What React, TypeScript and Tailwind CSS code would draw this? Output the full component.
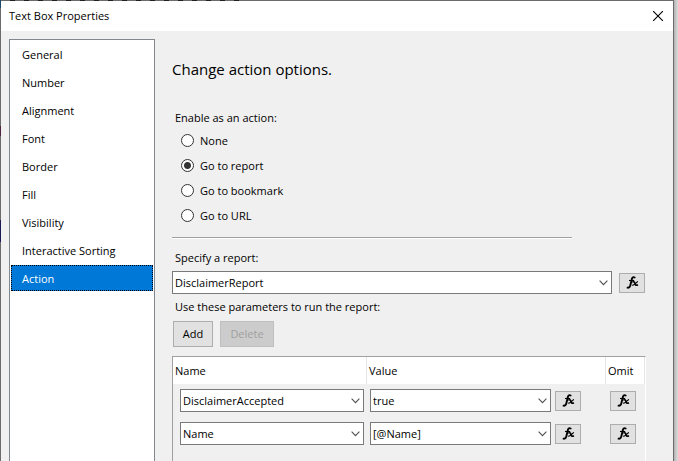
import { useState } from "react";
import type { ReactNode } from "react";

const pages = ["General", "Number", "Alignment", "Font", "Border", "Fill", "Visibility", "Interactive Sorting", "Action"];
const actions = ["None", "Go to report", "Go to bookmark", "Go to URL"];
const parameters = [
  { name: "DisclaimerAccepted", value: "true" },
  { name: "Name", value: "[@Name]" },
];

function Combo({ id, label, value }: { id?: string; label?: string; value: string }) {
  return (
    <div className="relative min-w-0 flex-1">
      <select
        id={id}
        aria-label={label}
        defaultValue={value}
        className="block h-[23px] w-full appearance-none border border-[#7a7a7a] bg-white pr-4 pl-[2px] text-[11px] leading-5 text-black"
      >
        <option>{value}</option>
      </select>
      <svg viewBox="0 0 9 6" className="pointer-events-none absolute top-[9px] right-1 h-[6px] w-[9px]" fill="none" stroke="#505050" strokeWidth="1.1">
        <path d="M0.6 0.7 4.5 4.6 8.4 0.7" />
      </svg>
    </div>
  );
}

function FxButton({ label }: { label: string }) {
  return (
    <button type="button" aria-label={label} className="flex h-5 w-[26px] shrink-0 items-center justify-center border border-[#adadad] bg-[#e1e1e1]">
      <svg viewBox="0 0 13 13" className="h-[13px] w-[13px]" fill="none" stroke="#000">
        <path d="M8.9 2.2C8.6 0.7 6.6 0.6 6 2.6L4.3 9.4C3.8 11.3 2.4 12.3 0.9 11.2" strokeWidth="1.9" />
        <path d="M3 4.5H8.2" strokeWidth="1.1" />
        <path d="M6.4 6.2C8 5.2 8.6 6 9 7.4S9.8 9.9 11.9 8.7" strokeWidth="1.7" />
        <path d="M12 5.6C10.6 5.4 8.4 9.8 6.2 9.1" strokeWidth="1.2" />
      </svg>
    </button>
  );
}

function HeaderCell({ children }: { children: ReactNode }) {
  return <th scope="col" className="h-[27px] border-r border-[#e5e5e5] bg-white pl-[2px] text-left font-normal">{children}</th>;
}

export default function App() {
  const [page, setPage] = useState("Action");
  const [action, setAction] = useState("Go to report");

  return (
    <div className="flex min-h-screen bg-[#d2d2d2] font-['Open_Sans','Noto_Sans',sans-serif] text-[11px] leading-4 text-black">
      <div className="w-px bg-[linear-gradient(#1d4a6b_8px,#6b6b6b_8px,#6b6b6b_126px,#4d2440_126px,#4d2440_136px,#6b6b6b_136px,#6b6b6b_220px,#1c1a55_220px,#1c1a55_242px,#6b6b6b_242px)]" />
      <div className="flex min-w-0 flex-1 flex-col border-r border-[#6b6b6b] bg-[#f0f0f0]">
        <div className="flex h-px bg-[#6b6b6b]">
          <div className="w-[244px] bg-[repeating-linear-gradient(90deg,#6b6b6b_0px,#6b6b6b_9px,#231f20_9px,#231f20_14px)]" />
        </div>
        <header className="flex h-[30px] items-center justify-between bg-white pr-[9px] pl-2">
          <h1>Text Box Properties</h1>
          <button type="button" aria-label="Close" className="flex h-3 w-3 items-center justify-center">
            <svg viewBox="0 0 10 10" className="h-[10px] w-[10px]" stroke="#000" strokeWidth="1.1">
              <path d="M0 0 10 10M10 0 0 10" />
            </svg>
          </button>
        </header>
        <div className="flex flex-1 pt-2 pl-2">
          <nav className="flex w-[146px] shrink-0 flex-col gap-[2px] border border-b-0 border-[#828790] bg-white p-px">
            {pages.map((item) => (
              <button
                key={item}
                type="button"
                onClick={() => setPage(item)}
                className={
                  item === page
                    ? "h-[26px] border border-dotted border-black bg-[#0078d7] pt-px pl-[10px] text-left text-white"
                    : "h-[26px] border border-transparent pt-px pl-[10px] text-left"
                }
              >
                {item}
              </button>
            ))}
          </nav>
          <main className="flex min-w-0 flex-1 flex-col pr-7 pl-[17px]">
            <h2 className="mt-5 text-[15px] leading-5">Change action options.</h2>
            <fieldset className="mt-[31px] pl-[3px]">
              <legend>Enable as an action:</legend>
              <div className="flex flex-col pt-[2px] pl-[6px]">
                {actions.map((item) => (
                  <label key={item} className="flex h-[25px] items-center gap-[6px]">
                    <input
                      type="radio"
                      name="action"
                      checked={item === action}
                      onChange={() => setAction(item)}
                      className="h-[13px] w-[13px] appearance-none rounded-full border border-[#333] bg-white checked:bg-[radial-gradient(circle,#333_3px,#fff_4px)]"
                    />
                    {item}
                  </label>
                ))}
              </div>
            </fieldset>
            <hr className="mt-[9px] mr-[73px] h-[2px] border-t border-b border-t-[#a0a0a0] border-b-white" />
            <label htmlFor="report" className="mt-[11px] pl-[3px]">Specify a report:</label>
            <div className="mt-[5px] flex items-center gap-[7px]">
              <Combo id="report" value="DisclaimerReport" />
              <FxButton label="Report expression" />
            </div>
            <p className="mt-[5px] pl-[3px]">Use these parameters to run the report:</p>
            <div className="mt-[6px] flex gap-[7px] pl-px">
              <button type="button" className="h-[26px] w-10 border border-[#adadad] bg-[#e1e1e1]">Add</button>
              <button type="button" disabled className="h-[26px] w-[54px] border border-[#bfbfbf] bg-[#cccccc] text-[#a0a0a0]">Delete</button>
            </div>
            <div className="mt-[9px] -mr-px flex-1 border border-b-0 border-[#a0a0a0] border-r-white">
              <table className="w-full table-fixed border-separate border-spacing-0">
                <colgroup>
                  <col className="w-[194px]" />
                  <col />
                  <col className="w-[39px]" />
                </colgroup>
                <thead>
                  <tr>
                    <HeaderCell>Name</HeaderCell>
                    <HeaderCell>Value</HeaderCell>
                    <HeaderCell>Omit</HeaderCell>
                  </tr>
                </thead>
                <tbody>
                  {parameters.map((parameter) => (
                    <tr key={parameter.name}>
                      <td className="h-[33px] pr-[3px] pl-[7px]">
                        <Combo label="Parameter name" value={parameter.name} />
                      </td>
                      <td className="pr-[25px] pl-[3px]">
                        <div className="flex items-center gap-1">
                          <Combo label="Parameter value" value={parameter.value} />
                          <FxButton label="Value expression" />
                        </div>
                      </td>
                      <td className="pl-1">
                        <FxButton label="Omit expression" />
                      </td>
                    </tr>
                  ))}
                </tbody>
              </table>
            </div>
          </main>
        </div>
      </div>
      <div className="w-1 bg-linear-to-r from-[#b4b4b4] to-[#dcdcdc]" />
    </div>
  );
}
